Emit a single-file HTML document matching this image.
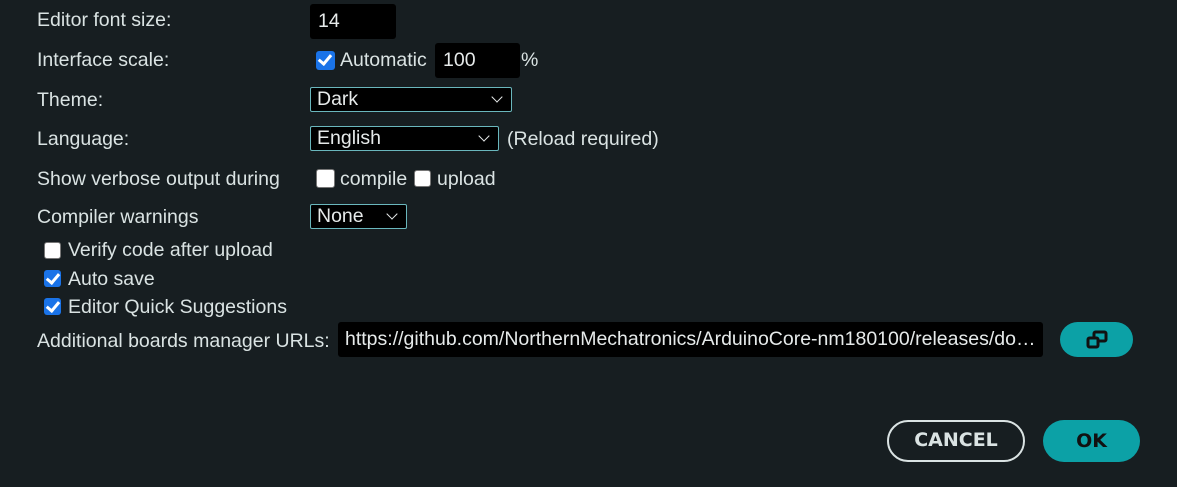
<!DOCTYPE html><html><head><style>
body{margin:0;width:1177px;height:487px;background:#171e21;font-family:"Liberation Sans",sans-serif;font-size:19.5px;color:#dae3e3;position:relative;overflow:hidden}
.a{position:absolute;white-space:nowrap;line-height:20px}
.in{position:absolute;background:#000;border-radius:3px;box-sizing:border-box;padding-left:8px;line-height:35px;color:#e6eaea;white-space:nowrap;overflow:hidden}
.sel{position:absolute;background:#000;border:1px solid #6ab7bd;border-radius:2px;box-sizing:border-box;padding-left:6px;line-height:23px;color:#e6eaea}
.sel:after{content:"";position:absolute;right:10px;top:5px;width:7px;height:7px;border-right:1.8px solid #e6eaea;border-bottom:1.8px solid #e6eaea;transform:rotate(45deg)}
.cb{position:absolute;width:17px;height:17px;border-radius:3px;box-sizing:border-box}
.off{background:#fff;border:1px solid #777}
.on{background:#1a73e8}
.on:after{content:"";position:absolute;left:5px;top:1px;width:5px;height:10px;border-right:3px solid #fff;border-bottom:3px solid #fff;transform:rotate(40deg)}
.btn{position:absolute;border-radius:22px;box-sizing:border-box;font-family:"DejaVu Sans",sans-serif;font-weight:bold;font-size:19px;text-align:center}
</style></head><body>
<div class="a" style="left:37px;top:10px">Editor font size:</div>
<div class="in" style="left:310px;top:4px;width:86px;height:35px">14</div>
<div class="a" style="left:37px;top:50px">Interface scale:</div>
<div class="cb on" style="left:316px;top:51px;width:19px;height:19px"></div>
<div class="a" style="left:340px;top:50px">Automatic</div>
<div class="in" style="left:435px;top:43px;width:85px;height:35px">100</div>
<div class="a" style="left:521px;top:50px">%</div>
<div class="a" style="left:37px;top:90px">Theme:</div>
<div class="sel" style="left:310px;top:87px;width:202px;height:25px">Dark</div>
<div class="a" style="left:37px;top:129px">Language:</div>
<div class="sel" style="left:310px;top:126px;width:189px;height:25px">English</div>
<div class="a" style="left:507px;top:129px">(Reload required)</div>
<div class="a" style="left:37px;top:169px">Show verbose output during</div>
<div class="cb off" style="left:316px;top:169px;width:19px;height:19px"></div>
<div class="a" style="left:340px;top:169px">compile</div>
<div class="cb off" style="left:414px;top:170px"></div>
<div class="a" style="left:437px;top:169px">upload</div>
<div class="a" style="left:37px;top:207px">Compiler warnings</div>
<div class="sel" style="left:310px;top:204px;width:97px;height:25px">None</div>
<div class="cb off" style="left:44px;top:242px"></div>
<div class="a" style="left:68px;top:240px">Verify code after upload</div>
<div class="cb on" style="left:44px;top:270px"></div>
<div class="a" style="left:68px;top:269px">Auto save</div>
<div class="cb on" style="left:44px;top:298px"></div>
<div class="a" style="left:68px;top:297px">Editor Quick Suggestions</div>
<div class="a" style="left:37px;top:331px">Additional boards manager URLs:</div>
<div class="in" style="left:338px;top:322px;width:705px;height:35px;padding-left:7px">https://github.com/NorthernMechatronics/ArduinoCore-nm180100/releases/do…</div>
<div class="btn" style="left:1060px;top:322px;width:73px;height:35px;background:#0ca1a6">
<svg width="26" height="22" viewBox="0 0 26 22" style="margin-top:7px"><rect x="10" y="3" width="12" height="9" rx="1.5" fill="none" stroke="#111" stroke-width="3"/><rect x="4" y="9" width="10" height="9" rx="1.5" fill="#0ca1a6" stroke="#111" stroke-width="3"/></svg></div>
<div class="btn" style="left:887px;top:420px;width:138px;height:42px;border:2.5px solid #dae3e3;line-height:37px;color:#dae3e3">CANCEL</div>
<div class="btn" style="left:1043px;top:420px;width:97px;height:42px;background:#0ca1a6;line-height:42px;color:#111">OK</div>
</body></html>
